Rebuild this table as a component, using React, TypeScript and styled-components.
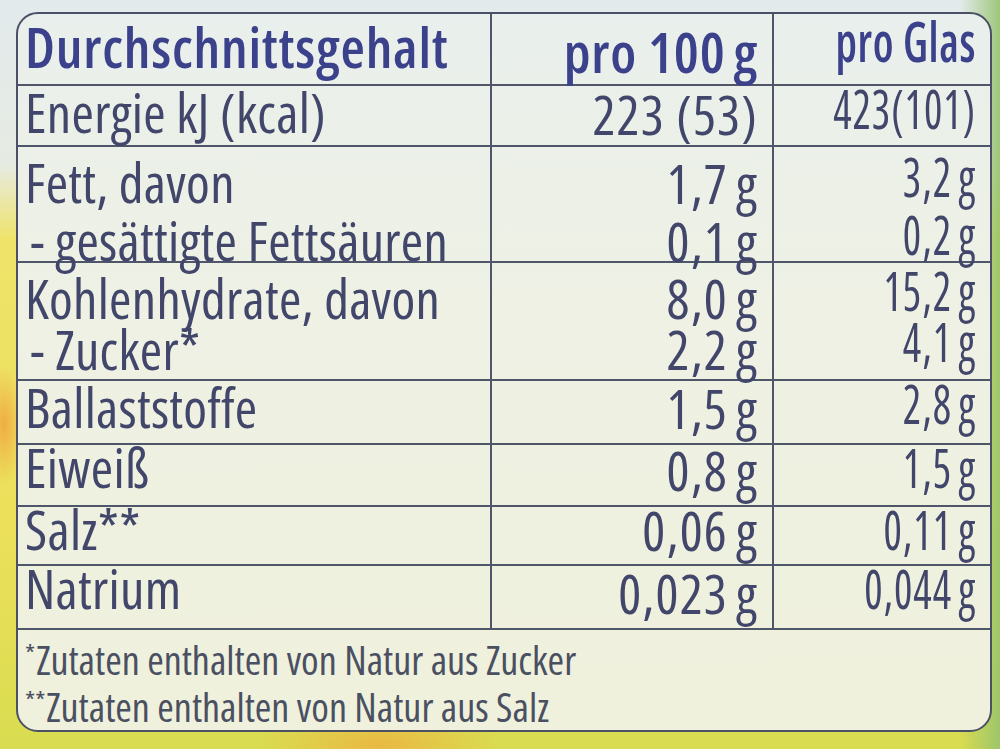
import React from "react";
import styled, { createGlobalStyle } from "styled-components";

const Global = createGlobalStyle`
  html, body { margin: 0; padding: 0; width: 1000px; height: 749px; overflow: hidden; }
  body {
    background:
      radial-gradient(ellipse 120px 40px at 380px 745px, rgba(240,170,60,0.7), rgba(240,170,60,0) 100%),
      radial-gradient(ellipse 20px 60px at 4px 425px, rgba(240,160,60,0.8), rgba(240,160,60,0) 100%),
      linear-gradient(90deg, rgba(0,0,0,0) 96%, rgba(150,195,110,0.9) 100%),
      linear-gradient(180deg, #e3eaec 0%, #e6ebe2 22%, #efe36a 32%, #ece05a 70%, #d9dc50 100%);
    font-family: "Open Sans", "Noto Sans", sans-serif;
  }
`;

const Page = styled.main`
  width: 1000px;
  height: 749px;
  padding: 12px 8px 0 16px;
  box-sizing: border-box;
`;

const Label = styled.section`
  width: 976px;
  height: 720px;
  box-sizing: border-box;
  border: 2px solid #4b5066;
  border-radius: 22px;
  background: linear-gradient(180deg, #e9efec 0%, #eef1e4 40%, #eff1dc 100%);
  display: flex;
  flex-direction: column;
  color: #41466a;
  font-stretch: 75%;
`;

const Row = styled.div<{ $h: number }>`
  display: grid;
  grid-template-columns: 472px 282px 1fr;
  height: ${(p) => p.$h}px;
  border-bottom: 2px solid #50566a;
  box-sizing: border-box;
`;

type Kind = "label" | "mid" | "right";

const Cell = styled.div<{ $pad: number; $lh?: number; $kind: Kind; $head?: boolean }>`
  padding-top: ${(p) => p.$pad}px;
  padding-left: ${(p) => (p.$kind === "label" ? 7 : 0)}px;
  padding-right: ${(p) => (p.$kind === "label" ? 0 : 14)}px;
  text-align: ${(p) => (p.$kind === "label" ? "left" : "right")};
  border-left: ${(p) => (p.$kind === "label" ? "none" : "2px solid #50566a")};
  font-size: ${(p) => (p.$head ? 56 : 54)}px;
  font-weight: ${(p) => (p.$head ? 650 : 400)};
  color: ${(p) => (p.$head ? "#3b418a" : "#41466a")};
  line-height: ${(p) => p.$lh ?? 44}px;
  letter-spacing: ${(p) => (p.$head ? "0.8px" : p.$kind === "label" ? "0.3px" : "1.2px")};
  white-space: nowrap;
`;

const Line = styled.div<{ $squeeze?: boolean }>`
  display: block;
  transform-origin: right center;
  transform: ${(p) => (p.$squeeze ? "scaleX(0.8)" : "none")};
`;

const Indent = styled.span`
  padding-left: 5px;
`;

const Thin = styled.span`
  margin-left: 8px;
`;

const Foot = styled.div`
  padding: 6px 0 0 7px;
  font-size: 40px;
  font-stretch: 80%;
  line-height: 47px;
  color: #4a5062;
  white-space: nowrap;
`;

const Star = styled.sup`
  font-size: 26px;
  vertical-align: 12px;
  line-height: 0;
  margin-right: 1px;
`;

type R = {
  h: number;
  pads: [number, number, number];
  lh?: number;
  label: React.ReactNode[];
  a: React.ReactNode[];
  b: React.ReactNode[];
  head?: boolean;
};

const g = (v: string) => (
  <>
    {v}
    <Thin>g</Thin>
  </>
);

const rows: R[] = [
  { h: 73, pads: [10, 15, 4], head: true, label: ["Durchschnittsgehalt"], a: [<>pro 100<Thin>g</Thin></>], b: ["pro Glas"] },
  { h: 62, pads: [4, 6, -6], label: ["Energie kJ (kcal)"], a: ["223 (53)"], b: ["423(101)"] },
  { h: 116, pads: [6, 7, -2], lh: 58, label: ["Fett, davon", <Indent>- gesättigte Fettsäuren</Indent>], a: [g("1,7"), g("0,1")], b: [g("3,2"), g("0,2")] },
  { h: 120, pads: [10, 10, 2], lh: 51, label: ["Kohlenhydrate, davon", <Indent>- Zucker*</Indent>], a: [g("8,0"), g("2,2")], b: [g("15,2"), g("4,1")] },
  { h: 64, pads: [4, 5, -4], label: ["Ballaststoffe"], a: [g("1,5")], b: [g("2,8")] },
  { h: 63, pads: [0, 3, -6], label: ["Eiweiß"], a: [g("0,8")], b: [g("1,5")] },
  { h: 60, pads: [-6, 1, -7], label: ["Salz**"], a: [g("0,06")], b: [g("0,11")] },
  { h: 65, pads: [0, 5, -7], label: ["Natrium"], a: [g("0,023")], b: [g("0,044")] },
];

export default function App() {
  return (
    <>
      <Global />
      <Page>
        <Label>
          {rows.map((r, i) => (
            <Row key={i} $h={r.h}>
              <Cell $kind="label" $pad={r.pads[0]} $lh={r.lh} $head={r.head}>
                {r.label.map((t, j) => (
                  <Line key={j}>{t}</Line>
                ))}
              </Cell>
              <Cell $kind="mid" $pad={r.pads[1]} $lh={r.lh} $head={r.head}>
                {r.a.map((t, j) => (
                  <Line key={j}>{t}</Line>
                ))}
              </Cell>
              <Cell $kind="right" $pad={r.pads[2]} $lh={r.lh} $head={r.head}>
                {r.b.map((t, j) => (
                  <Line key={j} $squeeze>
                    {t}
                  </Line>
                ))}
              </Cell>
            </Row>
          ))}
          <Foot>
            <div>
              <Star>*</Star>Zutaten enthalten von Natur aus Zucker
            </div>
            <div>
              <Star>**</Star>Zutaten enthalten von Natur aus Salz
            </div>
          </Foot>
        </Label>
      </Page>
    </>
  );
}
